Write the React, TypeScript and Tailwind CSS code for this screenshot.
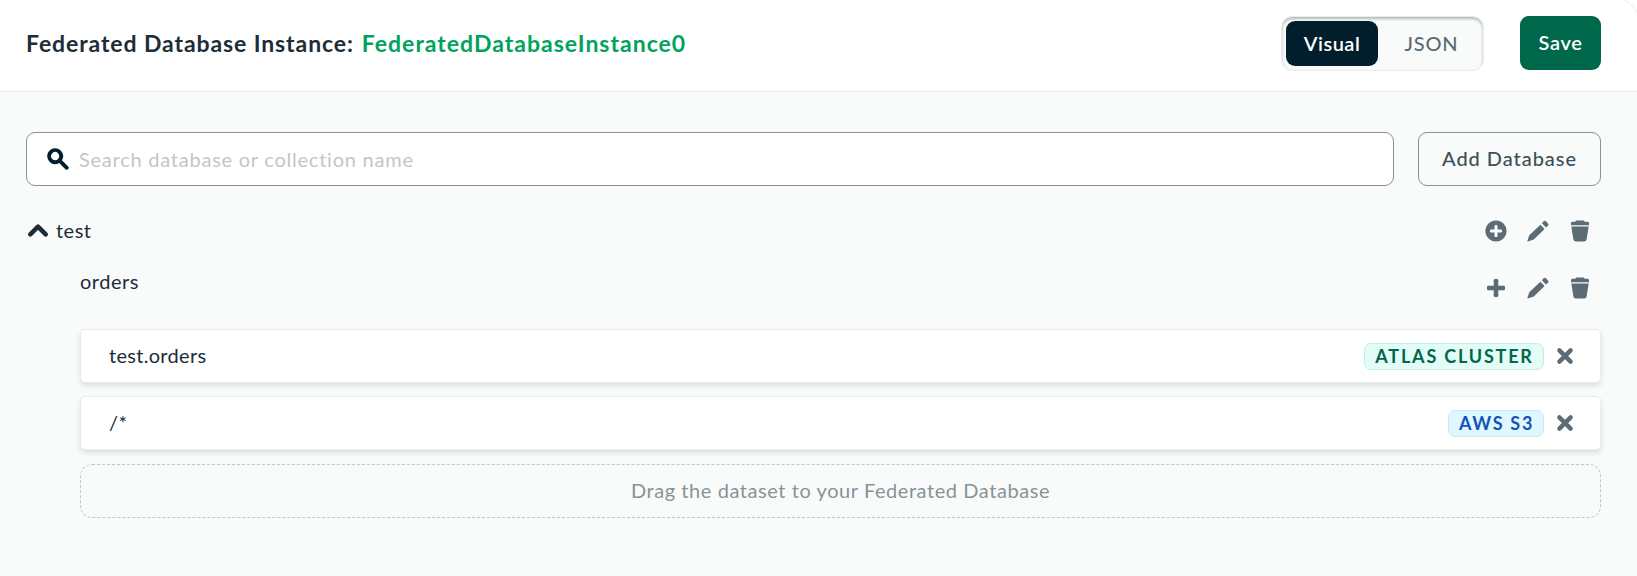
import React from "react";

type IconProps = { className?: string };

const PlusCircle = () => (
  <svg viewBox="0 0 24 24" className="size-6 fill-[#5c6c75]">
    <path
      fillRule="evenodd"
      d="M12 22.6a10.6 10.6 0 1 0 0-21.2 10.6 10.6 0 0 0 0 21.2ZM10.5 7.1a1.2 1.2 0 0 1 1.2-1.2h.6a1.2 1.2 0 0 1 1.2 1.2v3.4h3.4a1.2 1.2 0 0 1 1.2 1.2v.6a1.2 1.2 0 0 1-1.2 1.2h-3.4v3.4a1.2 1.2 0 0 1-1.2 1.2h-.6a1.2 1.2 0 0 1-1.2-1.2v-3.4H7.1a1.2 1.2 0 0 1-1.2-1.2v-.6a1.2 1.2 0 0 1 1.2-1.2h3.4Z"
    />
  </svg>
);

const Plus = () => (
  <svg viewBox="0 0 24 24" className="size-6 fill-[#5c6c75]">
    <path d="M9.7 4.3A1.3 1.3 0 0 1 11 3h2a1.3 1.3 0 0 1 1.3 1.3v5.4h5.4A1.3 1.3 0 0 1 21 11v2a1.3 1.3 0 0 1-1.3 1.3h-5.4v5.4A1.3 1.3 0 0 1 13 21h-2a1.3 1.3 0 0 1-1.3-1.3v-5.4H4.3A1.3 1.3 0 0 1 3 13v-2a1.3 1.3 0 0 1 1.3-1.3h5.4Z" />
  </svg>
);

const Pencil = () => (
  <svg viewBox="0 0 16 16" className="size-6 fill-[#5c6c75]">
    <path d="M10.6 2.8l1.3-1.400a.9.9 0 0 1 1.200 0l1.700 1.700a.9.9 0 0 1 0 1.200l-1.400 1.300ZM9.600 3.800l2.800 2.800-7.200 7-3.500 1.300c-.5.2-.8-.1-.7-.6l1.200-3.400Z" />
  </svg>
);

const Trash = () => (
  <svg viewBox="0 0 16 16" className="size-6 fill-[#5c6c75]">
    <path d="M5 1.8c0-.5.4-.8.9-.8h4.2c.5 0 .9.3.9.8h2c.6 0 1 .4 1 1v1.4H2V2.8c0-.6.4-1 1-1ZM2.200 5h11.600l-1.400 8.600A1.700 1.700 0 0 1 10.700 15H5.300a1.700 1.700 0 0 1-1.700-1.400Z" />
  </svg>
);

const Close = () => (
  <svg viewBox="0 0 24 24" className="size-6 fill-none stroke-[#5c6c75]" strokeWidth="4.4" strokeLinecap="round">
    <path d="M6.400 6.400l11.200 11.200M17.600 6.400L6.400 17.600" />
  </svg>
);

const Search = ({ className }: IconProps) => (
  <svg viewBox="0 0 16 16" className={className}>
    <path
      fillRule="evenodd"
      d="M2.323 9.819a5.302 5.302 0 0 0 6.463.805l4.144 4.144a1.3 1.3 0 0 0 1.838-1.838l-4.144-4.144a5.302 5.302 0 0 0-.805-6.463 5.306 5.306 0 0 0-7.496 0 5.306 5.306 0 0 0 0 7.496ZM7.980 4.163a2.700 2.700 0 1 1-3.818 3.818 2.700 2.700 0 0 1 3.818-3.818Z"
    />
  </svg>
);

const Caret = () => (
  <svg viewBox="0 0 24 24" className="size-6 fill-none stroke-[#1c2d38]" strokeWidth="4.6" strokeLinecap="round" strokeLinejoin="round">
    <path d="M4.300 15.300L12 7.700l7.700 7.600" />
  </svg>
);

const Actions = ({ add }: { add: React.ReactNode }) => (
  <div className="flex gap-[18px] pr-[9px]">
    <button>{add}</button>
    <button><Pencil /></button>
    <button><Trash /></button>
  </div>
);

const Dataset = ({ name, badge }: { name: React.ReactNode; badge: React.ReactNode }) => (
  <div className="flex h-[54px] items-center rounded-[5px] border border-[#e8edeb] bg-white pr-[23px] pl-7 shadow-[0_3px_5px_0_rgba(0,30,43,0.12)]">
    <span className="mb-0.5">{name}</span>
    <div className="ml-auto flex items-center gap-[9px]">
      {badge}
      <button><Close /></button>
    </div>
  </div>
);

export default function App() {
  return (
    <div className="relative h-[576px] overflow-hidden bg-[#f9fbfa] font-['Lato','Noto_Sans',sans-serif] text-[20px] leading-[30px] text-[#1c2d38]">
      <svg viewBox="0 0 14 14" className="absolute top-0 right-0 size-3.5 fill-none stroke-[#e8edeb]">
        <path d="M1.500 -0.500Q9 4 14 12" />
      </svg>
      <header className="flex h-[92px] border-b border-[#e8edeb] bg-white pt-4 pr-9 pl-[26px]">
        <h1 className="mt-[11px] text-[23px] leading-8 font-bold whitespace-nowrap">
          <span className="tracking-[0.900px]">Federated Database Instance:</span>
          <span className="ml-[8px] tracking-[1px] text-[#00a35c]">FederatedDatabaseInstance0</span>
        </h1>
        <div className="ml-auto flex h-[55px] w-[203px] rounded-[11px] border border-[#e8edeb] bg-[#f9fbfa] p-1 shadow-[inset_0_2px_3px_rgba(0,30,43,0.3)]">
          <button className="h-[45px] w-[92px] rounded-[9px] bg-[#001e2b] pb-0.5 font-semibold text-white">
            <span className="tracking-[0.500px]">Visual</span>
          </button>
          <button className="h-[45px] flex-1 pb-0.5 pl-1.5 font-medium text-[#5c6c75]">
            <span className="tracking-[0.800px]">JSON</span>
          </button>
        </div>
        <button className="ml-9 h-[54px] w-[81px] rounded-[9px] bg-[#00684a] pb-0.5 font-semibold text-white">
          <span className="tracking-[0.700px]">Save</span>
        </button>
      </header>

      <main className="pt-10 pr-9 pl-[26px]">
        <div className="flex gap-6">
          <div className="flex h-[54px] flex-1 items-center rounded-[9px] border border-[#889397] bg-white pl-[19px]">
            <Search className="size-6 fill-[#001e2b]" />
            <span className="ml-[9px] tracking-[0.760px] text-[#c1c7c6]">Search database or collection name</span>
          </div>
          <button className="h-[54px] w-[183px] rounded-[9px] border border-[#889397] pb-0.5 font-medium text-[#3d4f58]">
            <span className="tracking-[0.950px]">Add Database</span>
          </button>
        </div>

        <div className="mt-[30px] flex h-[30px] items-center justify-between">
          <div className="flex items-center gap-[6px]">
            <Caret />
            <span className="mb-0.5 tracking-[0.500px]">test</span>
          </div>
          <Actions add={<PlusCircle />} />
        </div>

        <div className="mt-[21px] flex h-[42px] items-start justify-between pl-[54px]">
          <span className="-mt-px tracking-[0.500px]">orders</span>
          <div className="mt-[9px]"><Actions add={<Plus />} /></div>
        </div>

        <div className="mt-5 flex flex-col gap-[13px] pl-[54px]">
          <Dataset
            name={<span className="tracking-[0.300px]">test.orders</span>}
            badge={
              <span className="flex h-[27px] w-[180px] items-center justify-center rounded-[7px] border border-[#c0f0e4] bg-[#e3fcf7] text-[18px] font-bold text-[#00684a]">
                <span className="mb-px ml-px tracking-[1.800px]">ATLAS CLUSTER</span>
              </span>
            }
          />
          <Dataset
            name={<span className="tracking-[0.500px]">/*</span>}
            badge={
              <span className="flex h-[27px] w-[96px] items-center justify-center rounded-[7px] border border-[#c3f0f0] bg-[#e1f7ff] text-[18px] font-bold text-[#1254b7]">
                <span className="mb-px ml-px tracking-[1.700px]">AWS S3</span>
              </span>
            }
          />
          <div className="mt-px flex h-[54px] items-center justify-center rounded-xl border border-dashed border-[#c1c7c6] pb-0.5 text-[#889397]">
            <span className="tracking-[0.570px]">Drag the dataset to your Federated Database</span>
          </div>
        </div>
      </main>
    </div>
  );
}
